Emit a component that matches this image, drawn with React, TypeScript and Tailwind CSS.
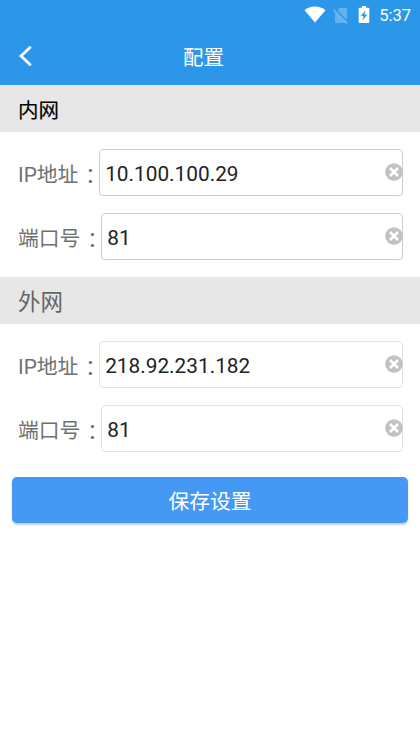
import React from "react";

function ClearIcon() {
  return (
    <svg className="-mr-px mb-[2px] h-[18px] w-[18px] shrink-0" viewBox="0 0 18 18" aria-hidden="true">
      <circle cx="9" cy="9" r="8.8" fill="#c2c2c2" />
      <path d="M5 5l8 8M13 5l-8 8" stroke="#fff" strokeWidth="2.5" />
    </svg>
  );
}

function StatusBar() {
  return (
    <div className="flex h-[30px] items-center justify-end pr-[9px] text-white">
      <svg className="mt-[-2px] mr-[6px] h-[17px] w-[22px]" viewBox="0 0 22 17" aria-hidden="true">
        <path d="M.5 4.200C3.500 1.500 7.200.4 11 .4s7.500 1.100 10.500 3.800L11 16.600z" fill="#fff" />
      </svg>
      <svg className="mr-[9px] h-[17px] w-[17px]" viewBox="0 0 17 17" aria-hidden="true">
        <path d="M7.500 1H14a1 1 0 0 1 1 1v11L5.200 3.300zM3.600 5.200L14.500 16H4a1 1 0 0 1-1-1V5.900z" fill="#64b1ef" />
        <path d="M1.300 2.500l14 14" stroke="#78b9f0" strokeWidth="1.300" />
      </svg>
      <svg className="mt-[-1px] mr-[9px] h-[17px] w-[12px]" viewBox="0 0 12 17" aria-hidden="true">
        <path d="M4 0h4v1.800h2.300a1 1 0 0 1 1 1V16a1 1 0 0 1-1 1H1.700a1 1 0 0 1-1-1V2.800a1 1 0 0 1 1-1H4z" fill="#fff" />
        <path d="M7.500 4.300L2.800 10h2.700l-1 4.500 4.800-6H6.500z" fill="#2c96e8" />
      </svg>
      <span className="pt-px text-[16.500px] leading-[30px]">5:37</span>
    </div>
  );
}

function Section({ title, className }: { title: string; className: string }) {
  return <h2 className={`flex h-[47px] items-center bg-[#e7e7e7] pt-[5px] pl-[18px] ${className}`}>{title}</h2>;
}

function Field({ label, value, border }: { label: string; value: string; border: string }) {
  return (
    <div className="flex h-[47px] items-center pr-[17px] pl-[18px]">
      <span className="flex shrink-0 pt-[4px] text-[20.800px] leading-[32px] text-[#707070]">
        {label}
        <span className="-mr-[1.500px] pl-[1.500px] font-['Noto_Sans_CJK_JP',sans-serif]">：</span>
      </span>
      <div className={`flex h-full min-w-0 flex-1 items-center justify-between rounded-[4px] border pl-[5px] ${border}`}>
        <span className="pt-[4px] text-[20.800px] text-[#222]">{value}</span>
        <ClearIcon />
      </div>
    </div>
  );
}

export default function App() {
  return (
    <div className="flex min-h-[746px] w-full flex-col bg-white font-['Roboto','Noto_Sans_CJK_SC',sans-serif]">
      <header className="h-[85px] bg-[#2c96e8] text-white">
        <StatusBar />
        <div className="grid h-[54px] grid-cols-[1fr_auto_1fr] items-center">
          <svg className="mb-[2px] ml-[18px] h-[22px] w-[15px]" viewBox="0 0 15 22" aria-hidden="true">
            <path d="M12.800 1.800L3 11l9.800 9.200" fill="none" stroke="#fff" strokeWidth="2.800" />
          </svg>
          <h1 className="mr-[13px] pt-[3px] text-[20.500px]">配置</h1>
        </div>
      </header>
      <Section title="内网" className="text-[20.500px] text-black [-webkit-text-stroke:0.15px_black]" />
      <div className="flex flex-col gap-[17px] py-[17px]">
        <Field label="IP地址" value="10.100.100.29" border="border-[#cecece]" />
        <Field label="端口号" value="81" border="border-[#cecece]" />
      </div>
      <Section title="外网" className="text-[22.500px] text-[#666]" />
      <div className="flex flex-col gap-[17px] py-[17px]">
        <Field label="IP地址" value="218.92.231.182" border="border-[#e3e3e3]" />
        <Field label="端口号" value="81" border="border-[#e3e3e3]" />
      </div>
      <button className="mx-3 mt-2 h-[46px] rounded-[5px] bg-[#4698f5] pt-[5px] text-[20.800px] text-white shadow-[0_2px_2px_rgba(70,130,210,0.350)]">
        保存设置
      </button>
    </div>
  );
}
